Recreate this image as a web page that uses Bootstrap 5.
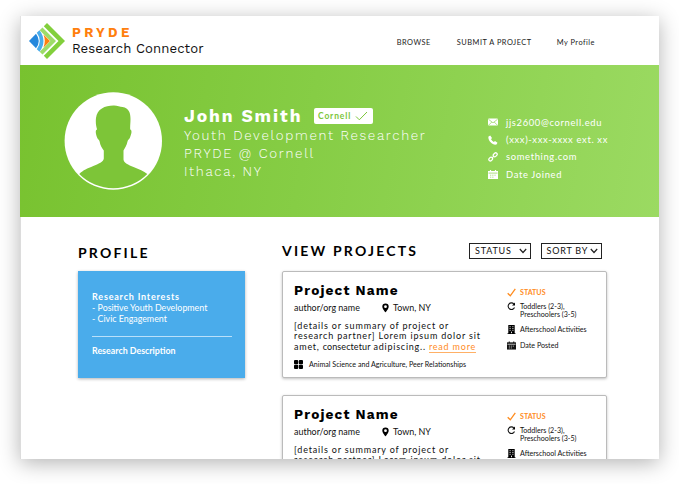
<!DOCTYPE html>
<html lang="en">
<head>
<meta charset="utf-8">
<meta name="viewport" content="width=device-width, initial-scale=1">
<title>PRYDE Research Connector</title>
<link href="https://cdn.jsdelivr.net/npm/bootstrap@5.3.0/dist/css/bootstrap.min.css" rel="stylesheet">
<script src="https://cdn.jsdelivr.net/npm/bootstrap@5.3.0/dist/js/bootstrap.bundle.min.js" defer></script>
<style>
body{font-family:"Lato",sans-serif;background:#fff;color:#111;overflow:hidden;height:484px}
svg{display:block;flex:none}
.app{width:639px;height:443px;margin:16px 0 0 20px;background:#fff;box-shadow:0 4px 20px rgba(0,0,0,.3)}
.top{height:49px;padding:6px 64px 0 7px;border-left:1px solid #e2e2e2}
.content-area{border-left:1px solid #dcdcdc;height:242px}
.brand{font-family:"Work Sans","Inter",sans-serif;line-height:16px;font-size:13.2px;color:#111;letter-spacing:.06px;padding:3px 0 0 6px}
.brand b{display:block;color:#ff7f0e;font-size:13.3px;font-weight:700;letter-spacing:3.3px;line-height:15px;margin-bottom:1px}
.menu{font-size:7.4px;line-height:10px;letter-spacing:.5px;padding-top:15.5px;gap:25px}
.menu a{color:#222;text-decoration:none}
.menu a:first-child{margin-right:1px}
.hero{height:152px;background:linear-gradient(100deg,#78c22f 0%,#86cd45 45%,#9bda62 100%);color:#fff}
.avatar{margin:27px 0 0 44px}
.who{font-family:"Work Sans","Inter",sans-serif;font-size:13.3px;font-weight:300;line-height:18px;letter-spacing:1.68px;margin:41.4px 0 0 22px;width:304px;white-space:nowrap}
.who>div:first-child{margin-bottom:1px}
.who-name{font-size:17.5px;font-weight:700;line-height:20px;letter-spacing:1.9px;width:119px}
.verified{width:58.5px;height:16px;background:#fff;border-radius:2px;color:#7cc63a;font:700 8.5px/16px "Lato",sans-serif;letter-spacing:.85px;padding-left:4px;margin-left:11px}
.contact{font-size:9.4px;line-height:17.3px;letter-spacing:.66px;margin-top:48.8px;white-space:nowrap}
.contact svg{margin-right:8px}
.section-title{font-size:14px;font-weight:700;line-height:20px;letter-spacing:2.2px;color:#000;margin:0}
.aside{width:167px;margin-left:57px;padding-top:26px}
.interest{height:107px;margin-top:8px;background:#4aaceb;color:#fff;font-size:8.85px;line-height:10.9px;padding:21px 14px 0;box-shadow:0 1px 3px rgba(0,0,0,.3)}
.interest b{font-size:9px;letter-spacing:.8px}
.rule{height:1px;background:#b9e0fa;margin:11px 0 9px;width:140px}
.main-col{width:325px;margin-left:37px;padding-top:24px}
.heading-row{margin-bottom:10px;padding-right:5px}
.pick{width:61.5px;height:16px;border:1px solid #222;font-size:9px;line-height:14px;letter-spacing:.8px;padding:0 3px 0 5px;margin-top:1.5px;white-space:nowrap}
.pick+.pick{margin-left:10px}
.project{height:107px;border:1px solid #bbb;border-radius:2px;background:#fff;box-shadow:0 1px 3px rgba(0,0,0,.25);padding:9px 0 0 11px;white-space:nowrap;margin-bottom:17px}
.project-name{font-family:"Work Sans","Inter",sans-serif;font-weight:700;font-size:13.6px;line-height:18px;letter-spacing:1.15px;color:#000}
.by{font-size:8.95px;line-height:12px;height:12px;margin-top:3px}
.by svg{margin-top:1px}
.org{width:88px}
.sum{font-size:9px;line-height:10.7px;letter-spacing:.83px;margin-top:6.5px}
.sum span{letter-spacing:.1px}
.sum em{font-style:normal;letter-spacing:.75px}
.sum a{color:#ff8c1e;text-decoration:none;letter-spacing:.8px;border-bottom:1px solid #ffb066}
.tags{font-size:7.12px;line-height:10px;margin-top:7px}
.tags svg{margin-right:6px}
.info{width:213px}
.facts{font-size:7.12px;line-height:8.5px;padding-top:8px}
.facts>div{display:flex}
.facts>div+div{margin-top:5px}
.facts>div+div+div{margin-top:6px}
.facts>div+div+div+div{margin-top:7.5px}
.facts svg{margin-right:4px}
.facts>div svg{margin-top:-.6px}
.facts b{color:#ff8c1e}
</style>
</head>
<body>
<svg width="0" height="0" class="position-absolute">
<symbol id="cal" viewBox="0 0 10 9"><path d="M0 1h10v8H0z" fill="currentColor"/><path d="M2.500 0v2M7.500 0v2" stroke="currentColor" stroke-width="1.200"/><path d="M.5 3.100h9" stroke="var(--cut)" stroke-width=".8"/><path d="M2 5.200h6.500M2 7.200h4.300" stroke="var(--cut)" stroke-width=".7" stroke-dasharray="1.300 .9"/></symbol>
<symbol id="chev" viewBox="0 0 8 6"><path d="M.8 1L4 4.500 7.200 1" fill="none" stroke="#222" stroke-width="1.200"/></symbol>
<symbol id="pin" viewBox="0 0 7 10"><path fill-rule="evenodd" d="M3.500.5A3.200 3.200 0 0 0 .3 3.700C.3 5.900 3.500 9.300 3.500 9.300S6.700 5.900 6.700 3.700A3.200 3.200 0 0 0 3.500.5zm0 1.800a1.400 1.400 0 1 1 0 2.800 1.400 1.400 0 0 1 0-2.800z"/></symbol>
<symbol id="grid" viewBox="0 0 9 9"><rect width="4.200" height="4.200" rx="1"/><rect x="4.800" width="4.200" height="4.200" rx="1"/><rect y="4.800" width="4.200" height="4.200" rx="1"/><rect x="4.800" y="4.800" width="4.200" height="4.200" rx="1"/></symbol>
<symbol id="tick" viewBox="0 0 9 9"><path d="M.7 5.200l2.600 2.600L8.300.8" fill="none" stroke="#ff8c1e" stroke-width="1.300"/></symbol>
<symbol id="turn" viewBox="0 0 9 9"><path d="M6.900 2A3.300 3.300 0 1 0 7.500 5.500" fill="none" stroke="#111" stroke-width="1.100"/><path d="M8 .6v2.900H5z"/></symbol>
<symbol id="bldg" viewBox="0 0 8 9"><path d="M.8 0h6.400v8.300H8V9H0v-.7h.8z"/><path d="M2.100 1.700h1M4.900 1.700h1M2.100 3.500h1M4.900 3.500h1M2.100 5.300h1M4.900 5.300h1M4 8.200V6.700" stroke="#fff" stroke-width=".9"/></symbol>
</svg>
<div class="app overflow-hidden">
  <header class="top d-flex">
    <svg width="38" height="38" viewBox="0 0 38 38">
      <path d="M19 1l18 18-18 18-3.200-3.200L30.500 19 15.800 4.200z" fill="#82cf3c"/>
      <path d="M14.500 5.500L28 19 14.500 32.500 11.700 29.700 22.400 19 11.700 8.300z" fill="#9ddc68"/>
      <path d="M1 19l7-7.300q5.500 7.300 0 14.600z" fill="#2487dc"/>
      <path d="M8.800 10.800l2.700-2.600q8 10.800 0 21.600l-2.700-2.600q6-8.200 0-16.400z" fill="#4aaceb"/>
      <path d="M15.500 12.500L22 19l-6.500 6.500q2.500-6.500 0-13z" fill="#ff7f0e"/>
    </svg>
    <div class="brand"><b>PRYDE</b>Research Connector</div>
    <nav class="menu d-flex ms-auto"><a href="#">BROWSE</a><a href="#">SUBMIT A PROJECT</a><a href="#">My Profile</a></nav>
  </header>
  <section class="hero d-flex">
    <svg class="avatar" width="98" height="98" viewBox="0 0 98 98">
      <circle cx="49.300" cy="49" r="48.700" fill="#fff"/>
      <path d="M49.500 13.500C53 13.300 56 15 58.500 15 65 16 66.500 21 66.500 27c0 4-.5 7-.3 10.500 2 .5 1.500 4-.2 8-.8 2-2 2-2.500 4-.8 4-2.500 6.500-4 9v9c0 3 5 5.500 10 7.500 6 2.300 10 4 13.800 7A47.700 47.700 0 0 1 15.300 82c4-4 8-5.500 14-8 5-2 10.500-4.500 10.500-7.500v-8c-2-3-3.500-5-4.200-9-.5-2-1.800-2-2.500-4-1.500-4-2-7.500 0-8C32 34 31.500 30 32 26c1-9 9-12.500 17.500-12.500z" fill="#7dc538"/>
    </svg>
    <div class="who">
      <div class="d-flex align-items-center"><span class="who-name">John Smith</span><span class="verified d-flex align-items-center">Cornell<svg width="13" height="10" viewBox="0 0 13 10" class="ms-1"><path d="M1 5.500l3.300 3.300L12 1" fill="none" stroke="#7cc63a"/></svg></span></div>
      <div>Youth Development Researcher</div><div>PRYDE @ Cornell</div><div>Ithaca, NY</div>
    </div>
    <div class="contact" style="--cut:#96d85b">
      <div class="d-flex align-items-center"><svg width="10" height="8" viewBox="0 0 10 8"><rect y=".5" width="10" height="7" rx="1" fill="#fff"/><path d="M.5 1.300L5 4.800l4.500-3.500M.8 7l3-3M9.200 7l-3-3" fill="none" stroke="#92d656" stroke-width=".7"/></svg>jjs2600@cornell.edu</div>
      <div class="d-flex align-items-center"><svg width="10" height="10" viewBox="0 0 10 10"><path d="M.5 1.500L2.200.4 4 3 3 4.200Q4 6 5.800 7L7 6l2.500 1.800-1 1.700C4.500 10.500-.5 5.500.5 1.500z" fill="#fff"/></svg>(xxx)-xxx-xxxx ext. xx</div>
      <div class="d-flex align-items-center"><svg width="10" height="10" viewBox="0 0 10 10"><g fill="none" stroke="#fff" stroke-width="1.200"><rect x="-2" y="-1.500" width="4" height="3" rx="1.500" transform="translate(2.700 7.100) rotate(-45)"/><rect x="-2.200" y="-1.500" width="4.400" height="3" rx="1.500" transform="translate(7.200 2.800) rotate(-45)"/><path d="M3.800 6.200L6.200 3.800"/></g></svg>something.com</div>
      <div class="d-flex align-items-center"><svg width="10" height="9"><use href="#cal"/></svg>Date Joined</div>
    </div>
  </section>
  <main class="content-area d-flex">
    <aside class="aside"><h2 class="section-title">PROFILE</h2>
      <div class="interest"><b>Research Interests</b><div>- Positive Youth Development</div><div>- Civic Engagement</div><div class="rule"></div><strong>Research Description</strong></div>
    </aside>
    <section class="main-col" style="--cut:#fff">
      <div class="heading-row d-flex"><h2 class="section-title">VIEW PROJECTS</h2>
        <div class="pick d-flex align-items-center justify-content-between ms-auto">STATUS<svg width="8" height="6"><use href="#chev"/></svg></div>
        <div class="pick d-flex align-items-center justify-content-between">SORT BY<svg width="8" height="6"><use href="#chev"/></svg></div></div>
      <article class="project d-flex">
        <div class="info"><div class="project-name">Project Name</div>
          <div class="by d-flex"><span class="org">author/org name</span><svg width="7" height="10"><use href="#pin"/></svg><span class="ms-1">Town, NY</span></div>
          <div class="sum">[details or summary of project or<br>research partner] Lorem ipsum dolor sit<br><em>amet, <span>consectetur</span> adipiscing..</em> <a href="#">read more</a></div>
          <div class="tags d-flex align-items-center"><svg width="9" height="9"><use href="#grid"/></svg>Animal Science and Agriculture, Peer Relationships</div></div>
        <div class="facts"><div><svg width="9" height="9"><use href="#tick"/></svg><b>STATUS</b></div><div><svg width="9" height="9"><use href="#turn"/></svg><span>Toddlers (2-3),<br>Preschoolers (3-5)</span></div><div><svg width="9" height="9"><use href="#bldg"/></svg>Afterschool Activities</div><div><svg width="9" height="9"><use href="#cal"/></svg>Date Posted</div></div>
      </article>
      <article class="project d-flex">
        <div class="info"><div class="project-name">Project Name</div>
          <div class="by d-flex"><span class="org">author/org name</span><svg width="7" height="10"><use href="#pin"/></svg><span class="ms-1">Town, NY</span></div>
          <div class="sum">[details or summary of project or<br>research partner] Lorem ipsum dolor sit</div></div>
        <div class="facts"><div><svg width="9" height="9"><use href="#tick"/></svg><b>STATUS</b></div><div><svg width="9" height="9"><use href="#turn"/></svg><span>Toddlers (2-3),<br>Preschoolers (3-5)</span></div><div><svg width="9" height="9"><use href="#bldg"/></svg>Afterschool Activities</div></div>
      </article>
    </section>
  </main>
</div>
</body>
</html>
